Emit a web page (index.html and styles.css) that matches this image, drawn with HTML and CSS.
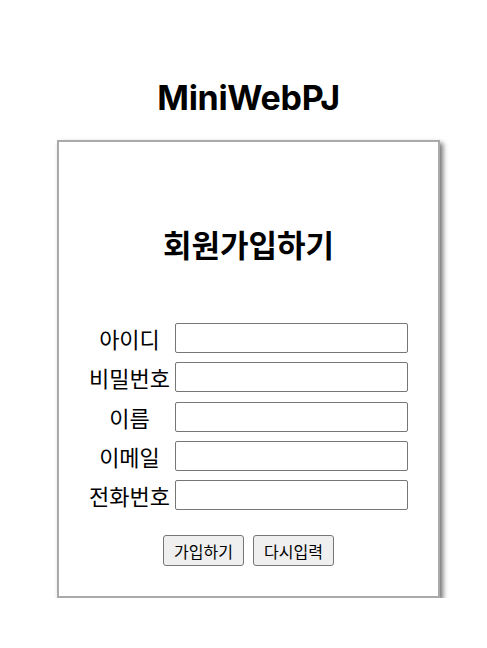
FILE: index.html
```html
<!DOCTYPE html>
<html lang="ko">
<head>
    <meta charset="UTF-8">
    <meta name="viewport" content="width=device-width, initial-scale=1.0">
    <title>MiniWebPJ - 회원가입</title>
    <link rel="stylesheet" href="styles.css">
</head>
<body>
    <div class="page">
        <h1 class="logo">MiniWebPJ</h1>

        <div class="join-box">
            <h2 class="join-title">회원가입하기</h2>

            <form class="join-form">
                <div class="fields">
                    <label for="userId">아이디</label>
                    <input type="text" id="userId">

                    <label for="userPw">비밀번호</label>
                    <input type="password" id="userPw">

                    <label for="userName">이름</label>
                    <input type="text" id="userName">

                    <label for="userEmail">이메일</label>
                    <input type="text" id="userEmail">

                    <label for="userTel">전화번호</label>
                    <input type="text" id="userTel">
                </div>

                <div class="buttons">
                    <button type="submit" class="btn">가입하기</button>
                    <button type="reset" class="btn">다시입력</button>
                </div>
            </form>
        </div>
    </div>
</body>
</html>
```

FILE: styles.css
```css
body {
    margin: 0;
    padding: 0 0 0 10px;
    font-family: "Noto Sans CJK KR", "Noto Sans", sans-serif;
    color: #000;
    background: #fff;
}

.page {
    width: 383px;
    margin: 0 auto;
    padding-top: 78px;
}

/* Logo */
.logo {
    margin: 0 0 22px;
    font-family: Inter, "Noto Sans", sans-serif;
    font-size: 34px;
    font-weight: 700;
    letter-spacing: -0.3px;
    line-height: 40px;
    text-align: center;
}

/* Box */
.join-box {
    box-sizing: border-box;
    height: 458px;
    border: 2px solid #aaa;
    box-shadow: 3px 3px 5px rgba(0, 0, 0, 0.55);
    padding-top: 82px;
}

.join-title {
    margin: 0 0 59px;
    font-size: 31px;
    font-weight: 700;
    line-height: 40px;
    text-align: center;
}

.fields {
    display: grid;
    grid-template-columns: 91px 233px;
    row-gap: 9.3px;
    padding-left: 25px;
    align-items: center;
}

.fields label {
    font-size: 22px;
    text-align: center;
    line-height: 30px;
}

.fields input {
    box-sizing: border-box;
    height: 30px;
    border: 1px solid #767676;
    border-radius: 2px;
    padding: 2px 4px;
    font-size: 16px;
}

.buttons {
    display: flex;
    justify-content: center;
    gap: 9px;
    margin-top: 25px;
}

.btn {
    box-sizing: border-box;
    width: 81px;
    height: 31px;
    border: 1px solid #767676;
    border-radius: 3px;
    background: #efefef;
    font-family: "Noto Sans CJK KR", sans-serif;
    font-size: 16px;
    padding: 0;
}
```
